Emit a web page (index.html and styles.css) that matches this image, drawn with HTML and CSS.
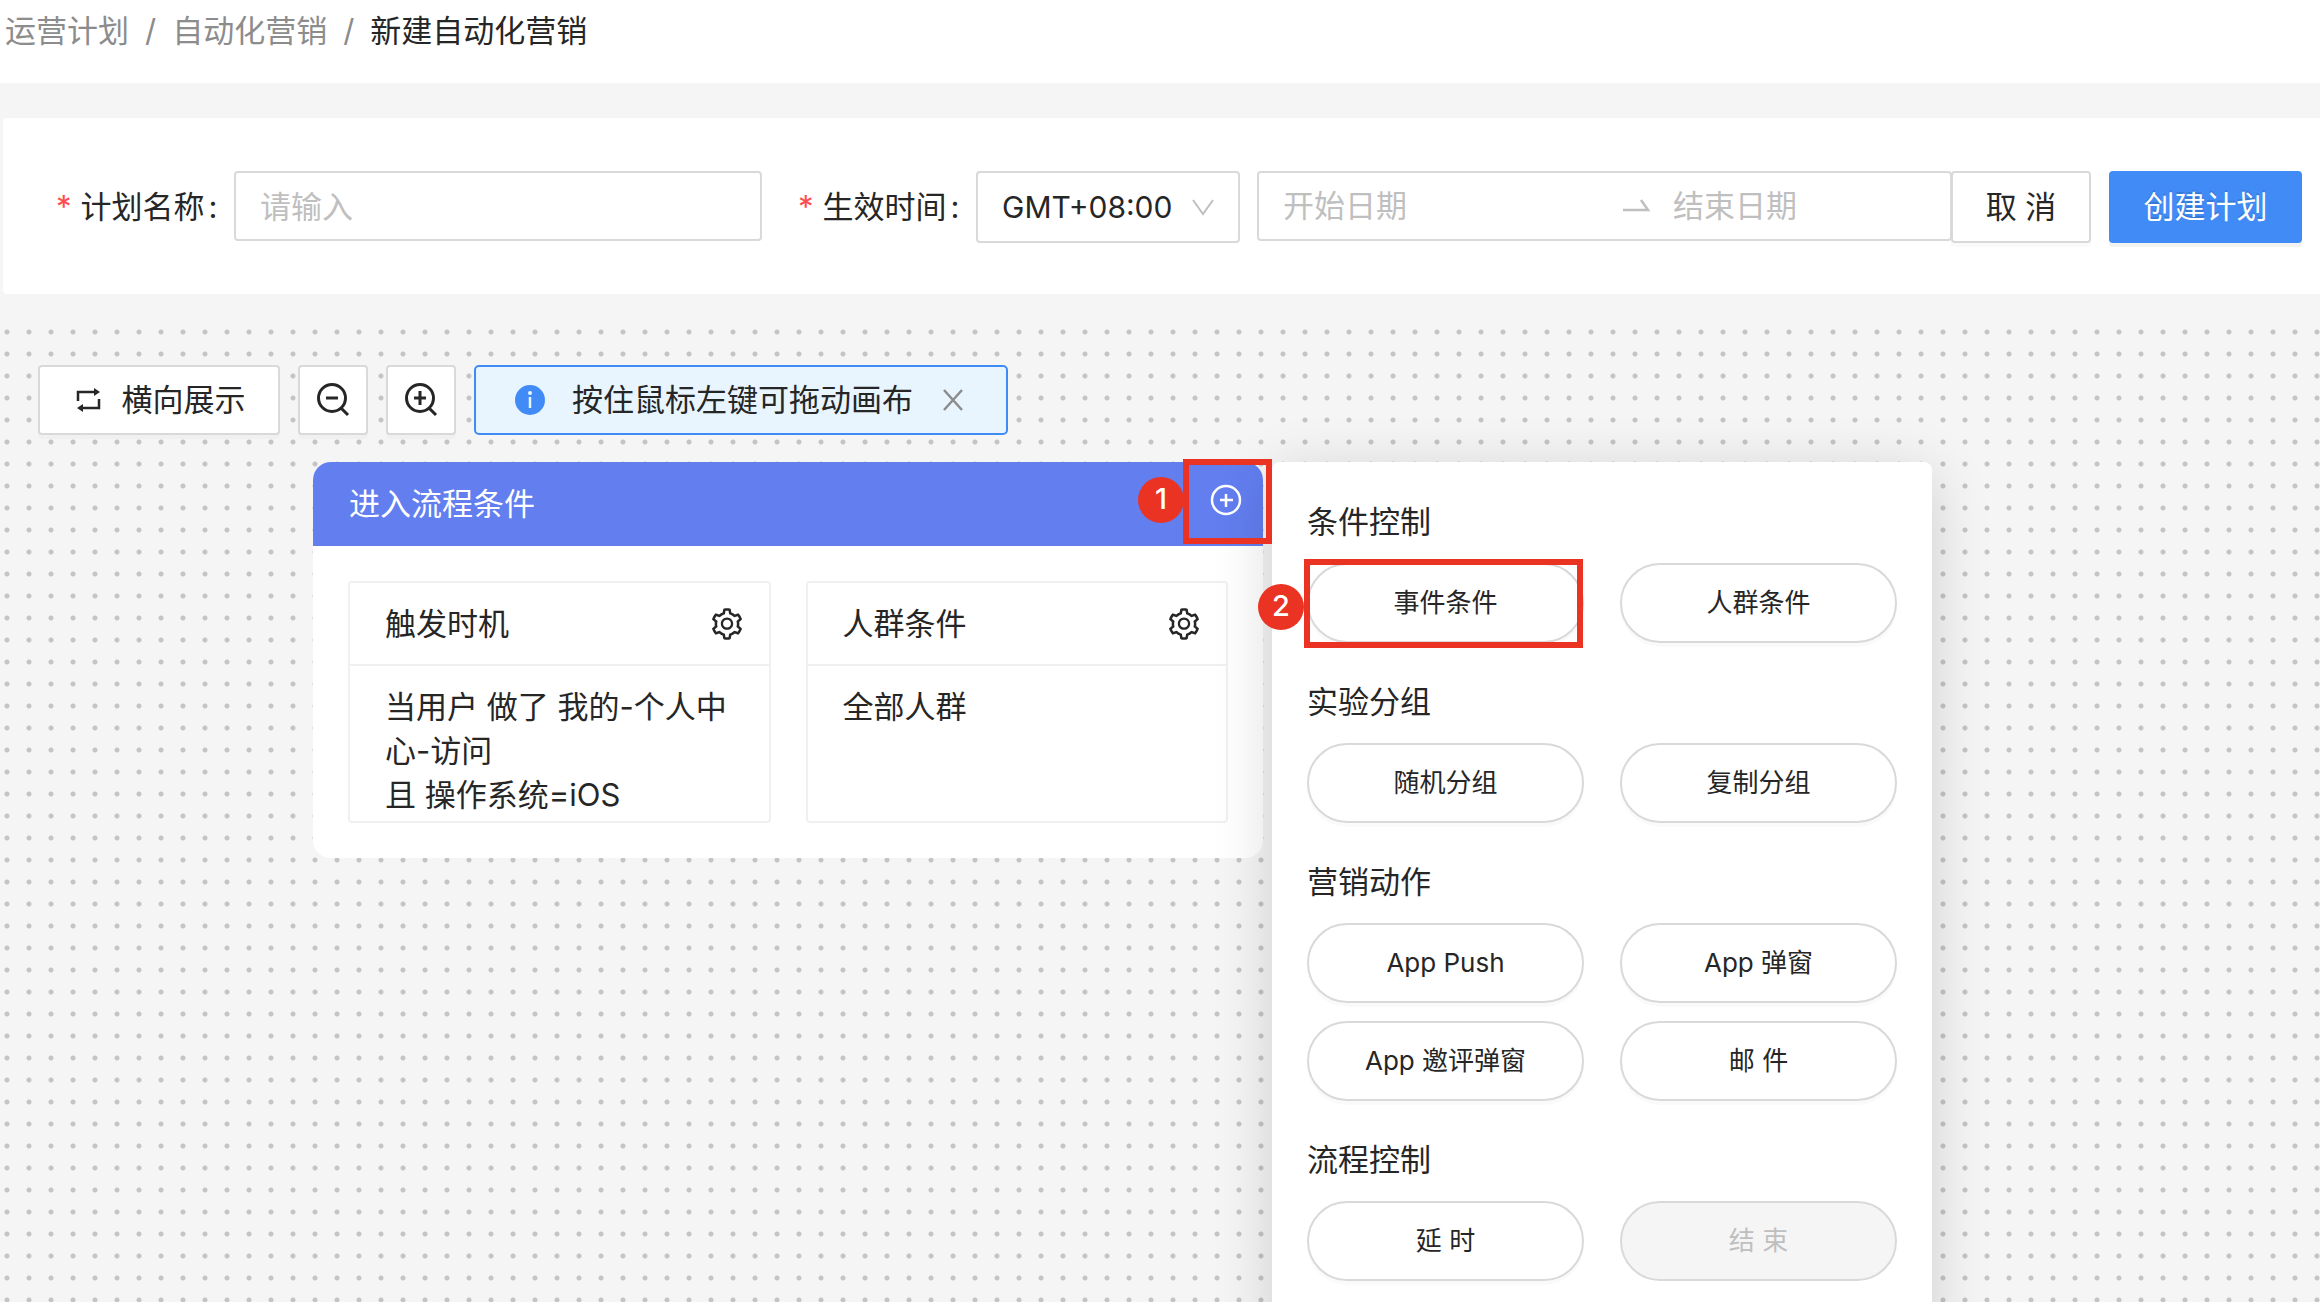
FILE: index.html
```html
<!DOCTYPE html>
<html lang="zh-CN">
<head>
<meta charset="utf-8">
<meta name="viewport" content="width=device-width, initial-scale=1">
<title>新建自动化营销</title>
<link rel="stylesheet" href="styles.css">
</head>
<body>
<svg class="sprite" aria-hidden="true">
  <symbol id="icon-setting" viewBox="0 0 1024 1024"><path fill="currentColor" d="M924.8 625.7l-65.5-56c3.1-19 4.7-38.4 4.7-57.8s-1.6-38.8-4.7-57.8l65.5-56a32.03 32.03 0 009.3-35.2l-.9-2.6a443.74 443.74 0 00-79.7-137.9l-1.8-2.1a32.12 32.12 0 00-35.1-9.5l-81.3 28.9c-30-24.6-63.5-44-99.7-57.6l-15.7-85a32.05 32.05 0 00-25.8-25.7l-2.7-.5c-52.1-9.4-106.9-9.4-159 0l-2.7.5a32.05 32.05 0 00-25.8 25.7l-15.8 85.4a351.86 351.86 0 00-99 57.4l-81.9-29.1a32 32 0 00-35.1 9.5l-1.8 2.1a446.02 446.02 0 00-79.7 137.9l-.9 2.6c-4.5 12.5-.8 26.5 9.3 35.2l66.3 56.6c-3.1 18.8-4.6 38-4.6 57.1 0 19.2 1.5 38.4 4.6 57.1L99 625.5a32.03 32.03 0 00-9.3 35.2l.9 2.6c18.1 50.4 44.9 96.9 79.7 137.9l1.8 2.1a32.12 32.12 0 0035.1 9.5l81.9-29.1c29.8 24.5 63.1 43.9 99 57.4l15.8 85.4a32.05 32.05 0 0025.8 25.7l2.7.5a449.4 449.4 0 00159 0l2.7-.5a32.05 32.05 0 0025.8-25.7l15.7-85a350 350 0 0099.7-57.6l81.3 28.9a32 32 0 0035.1-9.5l1.8-2.1c34.8-41.1 61.6-87.5 79.7-137.9l.9-2.6c4.5-12.3.8-26.3-9.3-35zM788.3 465.9c2.5 15.1 3.8 30.6 3.8 46.1s-1.3 31-3.8 46.1l-6.6 40.1 74.7 63.9a370.03 370.03 0 01-42.6 73.6L721 702.8l-31.4 25.8c-23.9 19.6-50.5 35-79.3 45.8l-38.1 14.3-17.9 97a377.5 377.5 0 01-85 0l-17.9-97.2-37.8-14.5c-28.5-10.8-55-26.2-78.7-45.7l-31.4-25.9-93.4 33.2c-17-22.9-31.2-47.6-42.6-73.6l75.5-64.5-6.5-40c-2.4-14.9-3.7-30.3-3.7-45.5 0-15.3 1.2-30.6 3.7-45.5l6.5-40-75.5-64.5c11.3-26.1 25.6-50.7 42.6-73.6l93.4 33.2 31.4-25.9c23.7-19.5 50.2-34.9 78.7-45.7l37.9-14.3 17.9-97.2c28.1-3.2 56.8-3.2 85 0l17.9 97 38.1 14.3c28.7 10.8 55.4 26.2 79.3 45.8l31.4 25.8 92.8-32.9c17 22.9 31.2 47.6 42.6 73.6L781.8 426l6.5 39.9zM512 326c-97.2 0-176 78.8-176 176s78.8 176 176 176 176-78.8 176-176-78.8-176-176-176zm79.2 255.2A111.6 111.6 0 01512 614c-29.9 0-58-11.7-79.2-32.8A111.6 111.6 0 01400 502c0-29.9 11.7-58 32.8-79.2C454 401.6 482.1 390 512 390c29.9 0 58 11.6 79.2 32.8A111.6 111.6 0 01624 502c0 29.9-11.7 58-32.8 79.2z"/></symbol>
</svg>

<nav class="breadcrumb" aria-label="breadcrumb">
  <a href="#">运营计划</a><span class="slash">/</span><a href="#">自动化营销</a><span class="slash">/</span><span class="current">新建自动化营销</span>
</nav>

<form class="plan-form">
  <label class="label" for="plan-name"><span class="required">*</span>计划名称<span class="colon">:</span></label>
  <input class="field name-input" id="plan-name" type="text" placeholder="请输入">
  <label class="label label-time" for="timezone"><span class="required">*</span>生效时间<span class="colon">:</span></label>
  <div class="select-wrap">
    <select class="field timezone" id="timezone"><option>GMT+08:00</option></select>
    <svg class="chevron" viewBox="0 0 22 20" aria-hidden="true"><path d="M1 2l10 14L21 2" fill="none" stroke="#bfbfbf" stroke-width="2"/></svg>
  </div>
  <div class="field range">
    <input class="range-start" type="text" placeholder="开始日期" aria-label="开始日期">
    <svg class="range-arrow" viewBox="0 0 28 16" aria-hidden="true"><path d="M0 12h25L18 2" fill="none" stroke="#bfbfbf" stroke-width="2.500"/></svg>
    <input class="range-end" type="text" placeholder="结束日期" aria-label="结束日期">
  </div>
  <button class="btn cancel" type="button">取 消</button>
  <button class="btn primary" type="submit">创建计划</button>
</form>

<main class="canvas">
  <div class="toolbar">
    <button class="btn tool-direction" type="button">
      <svg class="icon-loop" viewBox="0 0 26 26" aria-hidden="true"><path d="M2 14V5h17M23 12v9H6" fill="none" stroke="currentColor" stroke-width="2.500"/><path d="M18 1l6 4-6 4zM7 17l-6 4 6 4z" fill="currentColor"/></svg>
      横向展示
    </button>
    <button class="btn tool-zoom" type="button" aria-label="缩小">
      <svg class="icon" viewBox="0 0 36 36" aria-hidden="true"><path d="M26 26l7 7M11 16h12" fill="none" stroke="currentColor" stroke-width="3"/><circle cx="17" cy="16" r="13.500" fill="none" stroke="currentColor" stroke-width="3"/></svg>
    </button>
    <button class="btn tool-zoom" type="button" aria-label="放大">
      <svg class="icon" viewBox="0 0 36 36" aria-hidden="true"><path d="M26 26l7 7M11 16h12M17 9v14" fill="none" stroke="currentColor" stroke-width="3"/><circle cx="17" cy="16" r="13.500" fill="none" stroke="currentColor" stroke-width="3"/></svg>
    </button>
    <div class="notice" role="status">
      <svg class="icon-info" viewBox="0 0 32 32" aria-hidden="true"><circle cx="16" cy="16" r="15" fill="#418bf6"/><path d="M16 13v11" stroke="#e8f5ff" stroke-width="2.500"/><circle cx="16" cy="9" r="2" fill="#e8f5ff"/></svg>
      <span class="notice-text">按住鼠标左键可拖动画布</span>
      <button class="notice-close" type="button" aria-label="关闭">
        <svg class="icon-close" viewBox="0 0 22 22" aria-hidden="true"><path d="M2 1l18 20M20 1L2 21" fill="none" stroke="currentColor" stroke-width="2.500"/></svg>
      </button>
    </div>
  </div>

  <section class="node">
    <header class="node-head">
      <h2 class="node-title">进入流程条件</h2>
      <button class="node-add" type="button" aria-label="添加节点">
        <svg class="icon-plus" viewBox="0 0 32 32" aria-hidden="true"><circle cx="16" cy="16" r="14" fill="none" stroke="currentColor" stroke-width="2.500"/><path d="M16 10v13M10 16h13" stroke="currentColor" stroke-width="2.500"/></svg>
      </button>
    </header>
    <div class="node-body">
      <article class="rule">
        <header class="rule-head">
          <h3 class="rule-title">触发时机</h3>
          <button class="rule-setting" type="button" aria-label="设置触发时机"><svg class="icon"><use href="#icon-setting"/></svg></button>
        </header>
        <p class="rule-text">当用户 做了 我的-个人中心-访问<br>且 操作系统=iOS</p>
      </article>
      <article class="rule">
        <header class="rule-head">
          <h3 class="rule-title">人群条件</h3>
          <button class="rule-setting" type="button" aria-label="设置人群条件"><svg class="icon"><use href="#icon-setting"/></svg></button>
        </header>
        <p class="rule-text">全部人群</p>
      </article>
    </div>
  </section>

  <aside class="panel">
    <section class="group">
      <h3 class="group-title">条件控制</h3>
      <div class="group-items">
        <button class="pill" type="button">事件条件</button>
        <button class="pill" type="button">人群条件</button>
      </div>
    </section>
    <section class="group">
      <h3 class="group-title">实验分组</h3>
      <div class="group-items">
        <button class="pill" type="button">随机分组</button>
        <button class="pill" type="button">复制分组</button>
      </div>
    </section>
    <section class="group">
      <h3 class="group-title">营销动作</h3>
      <div class="group-items">
        <button class="pill" type="button">App Push</button>
        <button class="pill" type="button">App 弹窗</button>
        <button class="pill" type="button">App 邀评弹窗</button>
        <button class="pill" type="button">邮 件</button>
      </div>
    </section>
    <section class="group">
      <h3 class="group-title">流程控制</h3>
      <div class="group-items">
        <button class="pill" type="button">延 时</button>
        <button class="pill" type="button" disabled>结 束</button>
      </div>
    </section>
  </aside>

  <div class="mark mark-add"></div>
  <span class="step step-one">1</span>
  <div class="mark mark-event"></div>
  <span class="step step-two">2</span>
</main>
</body>
</html>
```
FILE: styles.css
```css
*, *::before, *::after { box-sizing: border-box; }

body {
  display: flex;
  flex-direction: column;
  height: 100vh;
  margin: 0;
  overflow: hidden;
  background: #f5f5f5;
  color: #262626;
  font-family: Inter, "Noto Sans CJK SC", sans-serif;
  font-size: 31px;
  line-height: 44px;
}

h2, h3, p { margin: 0; font-size: inherit; font-weight: 400; }

button, input, select { margin: 0; color: inherit; font: inherit; }

button { padding: 0; border: 0; background: none; cursor: pointer; }

svg { display: block; flex: none; }

.sprite { position: absolute; width: 0; height: 0; }

.icon { width: 36px; height: 36px; }

/* Breadcrumb */
.breadcrumb {
  flex: none;
  height: 83px;
  padding: 9px 5px;
  background: #fff;
  color: #8c8c8c;
  white-space: nowrap;
}

.breadcrumb a { color: inherit; text-decoration: none; }
.breadcrumb .current { color: #262626; }
.slash { margin: 0 16px; }

/* Plan form */
.plan-form {
  display: flex;
  flex: none;
  align-items: flex-start;
  margin: 35px 0 27px 3px;
  padding: 53px 18px 51px 53px;
  border-radius: 4px 0 0 4px;
  background: #fff;
}

.label { flex: none; width: 178px; line-height: 72px; white-space: nowrap; }
.label-time { margin-left: 36px; }
.required { margin-right: 9px; color: #ff4d4f; }
.colon { margin-left: 4px; }

.field {
  height: 70px;
  border: 2px solid #d9d9d9;
  border-radius: 4px;
  background: #fff;
}

.name-input { flex: 1 1 528px; min-width: 0; padding: 0 24px; }

::placeholder { color: #bfbfbf; opacity: 1; }

.select-wrap { position: relative; flex: none; }

.timezone {
  width: 264px;
  height: 72px;
  padding: 0 24px;
  appearance: none;
  font-size: 30px;
}

.chevron {
  position: absolute;
  top: 27px;
  right: 26px;
  width: 22px;
  height: 20px;
  pointer-events: none;
}

.range {
  display: flex;
  flex: 1 1 695px;
  align-items: center;
  min-width: 0;
  margin-left: 17px;
  padding: 0 24px;
}

.range input { min-width: 0; padding: 0; border: 0; outline: 0; background: none; }
.range-start { flex: 1 1 340px; }
.range-end { flex: 1 1 253px; }
.range-arrow { width: 28px; height: 16px; margin-right: 22px; }

.btn {
  display: flex;
  flex: none;
  align-items: center;
  justify-content: center;
  height: 72px;
  border: 2px solid #d9d9d9;
  border-radius: 4px;
  background: #fff;
  box-shadow: 0 4px 0 rgba(0, 0, 0, 0.02);
  white-space: nowrap;
}

.cancel { width: 140px; margin-left: -1px; }

.primary {
  width: 193px;
  margin-left: 18px;
  border-color: #418bf6;
  background: #418bf6;
  box-shadow: 0 4px 0 rgba(0, 0, 0, 0.05);
  color: #fff;
  text-shadow: 0 -2px 0 rgba(0, 0, 0, 0.12);
}

/* Flow canvas */
.canvas {
  position: relative;
  flex: 1;
  min-height: 0;
  overflow: hidden;
  background-image: radial-gradient(circle, #c4c4c4 2px, transparent 3px);
  background-position: -4px 0;
  background-size: 22px 22px;
}

.toolbar { display: flex; gap: 18px; padding: 44px 38px; }
.toolbar .btn { height: 70px; }
.tool-direction { gap: 20px; width: 242px; padding-left: 3px; }
.tool-zoom { width: 70px; }
.icon-loop { width: 26px; height: 26px; }

.notice {
  display: flex;
  align-items: center;
  width: 534px;
  height: 70px;
  padding: 0 38px;
  border: 2px solid #418bf6;
  border-radius: 5px;
  background: #e8f5ff;
}

.icon-info { width: 32px; height: 32px; margin-right: 26px; }
.notice-text { flex: none; white-space: nowrap; }
.notice-close { margin-left: 29px; color: #8c8c8c; }
.icon-close { width: 22px; height: 22px; }

/* Entry node */
.node {
  position: absolute;
  top: 141px;
  left: 313px;
  width: 950px;
  overflow: hidden;
  border-radius: 18px;
  background: #fff;
}

.node-head {
  display: flex;
  align-items: center;
  justify-content: space-between;
  height: 84px;
  padding: 0 21px 0 36px;
  background: #627eef;
  color: #fff;
}

.node-add { padding-bottom: 8px; color: #fff; }
.icon-plus { width: 32px; height: 32px; }

.node-body {
  display: grid;
  grid-template-columns: 1fr 1fr;
  gap: 35px;
  padding: 35px;
}

.rule {
  height: 242px;
  overflow: hidden;
  border: 2px solid #f0f0f0;
  border-radius: 4px;
}

.rule-head {
  display: flex;
  align-items: center;
  justify-content: space-between;
  height: 83px;
  padding: 0 24px 0 35px;
  border-bottom: 2px solid #f0f0f0;
}

.rule-text { padding: 19px 35px; }

/* Node picker */
.panel {
  position: absolute;
  top: 141px;
  left: 1272px;
  display: flex;
  flex-direction: column;
  gap: 35px;
  width: 660px;
  padding: 36px 35px 70px;
  border-radius: 8px;
  background: #fff;
  box-shadow: 0 12px 60px rgba(0, 0, 0, 0.16);
}

.group-title { margin-bottom: 17px; line-height: 48px; }

.group-items {
  display: grid;
  grid-template-columns: 1fr 1fr;
  gap: 18px 36px;
}

.pill {
  height: 80px;
  border: 2px solid #d9d9d9;
  border-radius: 40px;
  background: #fff;
  box-shadow: 0 4px 0 rgba(0, 0, 0, 0.02);
  font-size: 26px;
}

.pill:disabled {
  background: #f5f5f5;
  box-shadow: none;
  color: #bfbfbf;
  cursor: not-allowed;
}

/* Walkthrough marks laid over the canvas */
.mark {
  position: absolute;
  border: 6px solid #eb3323;
  pointer-events: none;
}

.mark-add { top: 138px; left: 1183px; width: 89px; height: 85px; }
.mark-event { top: 238px; left: 1304px; width: 279px; height: 89px; }

.step {
  position: absolute;
  width: 46px;
  height: 46px;
  border-radius: 50%;
  background: #eb3323;
  color: #fff;
  font-size: 29px;
  font-weight: 500;
  line-height: 44px;
  text-align: center;
}

.step-one { top: 156px; left: 1138px; }
.step-two { top: 263px; left: 1258px; }
```
